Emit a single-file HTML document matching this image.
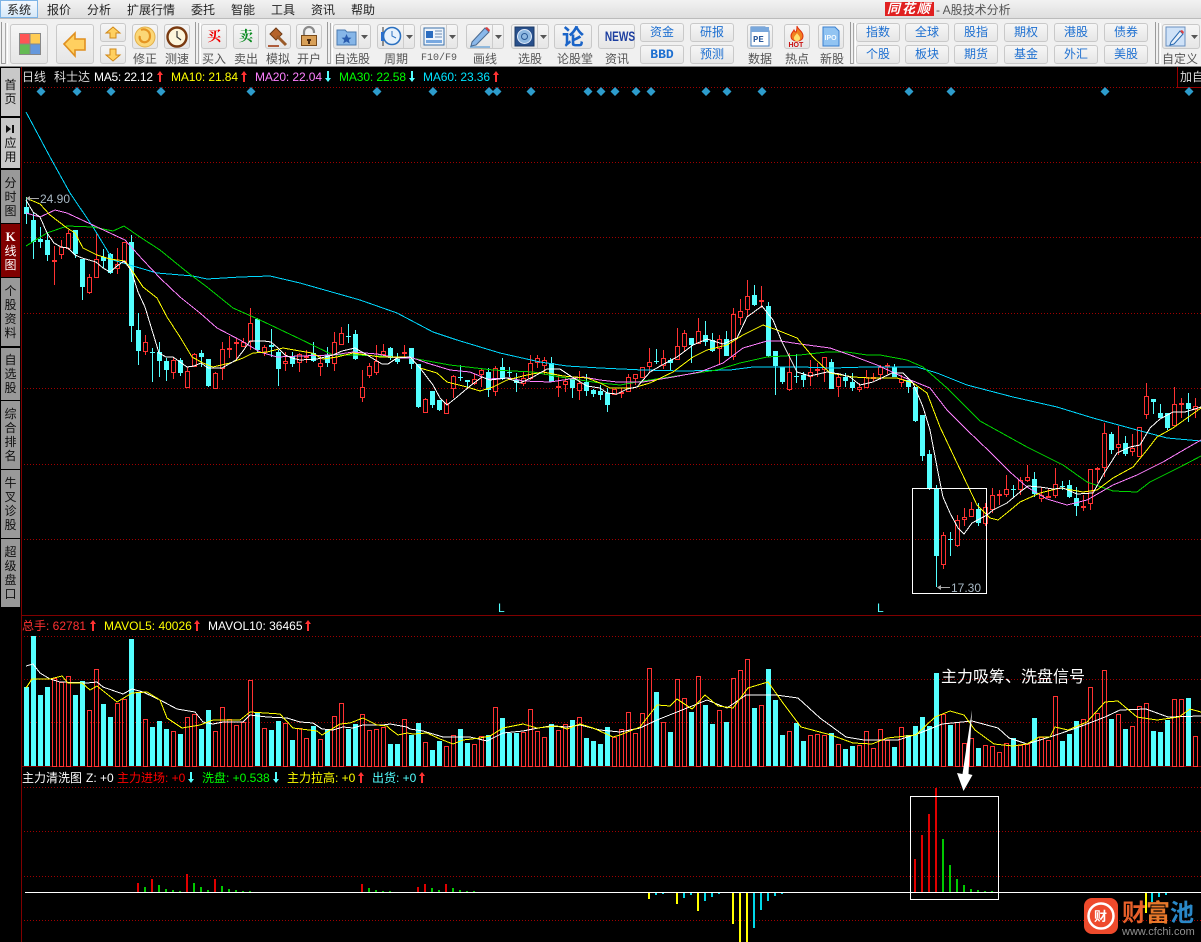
<!DOCTYPE html>
<html><head><meta charset="utf-8"><title>A股技术分析</title>
<style>
html,body{margin:0;padding:0;background:#000;width:1201px;height:942px;overflow:hidden}
body{position:relative;font:12px/14px "Liberation Sans","WenQuanYi Zen Hei","Noto Sans CJK SC",sans-serif}
#menu{position:absolute;left:0;top:0;width:1201px;height:18px;background:linear-gradient(#f2f2f2,#dedede);border-bottom:1px solid #bbb}
#menu span{position:absolute;top:3px;color:#222;white-space:nowrap}
#sel{position:absolute;left:0;top:0;width:36px;height:16px;border:1px solid #7db4e6;background:linear-gradient(#f4f9fe,#d6e8f8)}
#tb{position:absolute;left:0;top:19px;width:1201px;height:47px;background:#f0f0f0;border-bottom:1px solid #888}
.b{position:absolute;box-sizing:border-box;background:linear-gradient(#f6f6f6,#e6e6e6);border:1px solid #c9c9c9;border-radius:3px;text-align:center}
.b svg{position:absolute;left:0;top:0}
.l{position:absolute;top:52px;color:#555;white-space:nowrap}
.t{color:#1d6fd0;line-height:17px}
.s{position:absolute;top:23px;width:1px;height:41px;border-left:1px solid #aaa;border-right:1px solid #fff}
.s2{position:absolute;top:22px;width:4px;height:42px;border-left:1px solid #999;border-bottom:1px solid #999;border-top:0;box-sizing:border-box}
.side{position:absolute;left:1px;width:19px;background:#999;color:#111;text-align:center;line-height:14px;box-sizing:border-box;display:flex;flex-direction:column;justify-content:center;align-items:center}
svg.c{position:absolute;left:0;top:0}
svg text{font-family:"Liberation Sans","WenQuanYi Zen Hei","Noto Sans CJK SC",sans-serif;font-size:12px}
</style></head><body>
<div id="menu"><div id="sel"></div>
<span style="left:7px">系统</span><span style="left:47px">报价</span><span style="left:87px">分析</span><span style="left:127px">扩展行情</span><span style="left:191px">委托</span><span style="left:231px">智能</span><span style="left:271px">工具</span><span style="left:311px">资讯</span><span style="left:351px">帮助</span>
<span style="left:885px;top:2px;width:49px;height:14px;background:#e02020;color:#fff;font-weight:bold;font-style:italic;line-height:14px;font-size:13px;text-align:center;letter-spacing:2px">同花顺</span>
<span style="left:936px;color:#555">- A股技术分析</span></div>
<div id="tb"></div>
<div class="s2" style="left:1px"></div><div class="s" style="left:5px"></div>

<div class="b" style="left:10px;top:24px;width:38px;height:40px"><svg width="36" height="38"><path d="M9 9h10v10H9z" fill="#f55"/><path d="M19 9h10v10H19z" fill="#fc5"/><path d="M9 19h10v10H9z" fill="#6b5"/><path d="M19 19h10v10H19z" fill="#69d"/><path d="M8.5 8.5h21v21h-21zM19 9v20M9 19h20" fill="none" stroke="#888"/></svg></div>
<div class="b" style="left:56px;top:24px;width:38px;height:40px"><svg width="36" height="38"><path d="M7 19 18 8v6h10v11H18v6z" fill="#ffd060" stroke="#e09020" stroke-width="1.6"/></svg></div>
<div class="b" style="left:100px;top:23px;width:26px;height:19px"><svg width="24" height="17"><path d="M12 3l7 6h-4v5H9V9H5z" fill="#ffd060" stroke="#d08818"/></svg></div>
<div class="b" style="left:100px;top:45px;width:26px;height:19px"><svg width="24" height="17"><path d="M12 15l7-6h-4V3H9v6H5z" fill="#ffd060" stroke="#d08818"/></svg></div>
<div class="b" style="left:132px;top:24px;width:26px;height:25px"><svg width="24" height="23"><circle cx="12" cy="12" r="10" fill="#fbd777" stroke="#e2b04a"/><path d="M8 5c4-2 9 1 9 6s-4 7-7 6-4-4-3-6" fill="none" stroke="#e49422" stroke-width="2.2"/></svg></div>
<span class="l" style="left:133px">修正</span>
<div class="b" style="left:164px;top:24px;width:26px;height:25px"><svg width="24" height="23"><circle cx="12" cy="12" r="9.5" fill="#fdf6dc" stroke="#7a3a10" stroke-width="2.4"/><path d="M12 6v6l4 3" fill="none" stroke="#333" stroke-width="1.2"/></svg></div>
<span class="l" style="left:165px">测速</span>

<div class="s2" style="left:195px"></div><div class="s" style="left:198px"></div>
<div class="b" style="left:201px;top:24px;width:26px;height:25px;color:#e00;font:bold 14px/23px 'Noto Serif CJK SC',serif">买</div><span class="l" style="left:202px">买入</span>
<div class="b" style="left:233px;top:24px;width:26px;height:25px;color:#098a20;font:bold 14px/23px 'Noto Serif CJK SC',serif">卖</div><span class="l" style="left:234px">卖出</span>
<div class="b" style="left:265px;top:24px;width:26px;height:25px"><svg width="24" height="23"><path d="M4 9l6-6 6 6-6 6z" fill="#b5632a" stroke="#6e3a14"/><path d="M11 11l9 9" stroke="#9a5a28" stroke-width="3"/><path d="M2 21h11" stroke="#a03a10" stroke-width="1.6"/></svg></div><span class="l" style="left:266px">模拟</span>
<div class="b" style="left:296px;top:24px;width:26px;height:25px"><svg width="24" height="23"><path d="M7 11V7a5 5 0 0 1 10 0v1" fill="none" stroke="#8a8a8a" stroke-width="2.2"/><path d="M4.5 10.5h15v10h-15z" fill="#d8a058" stroke="#7a4a18"/><path d="M10 14h4v2h-1v3h-2v-3h-1z" fill="#4a2a10"/></svg></div><span class="l" style="left:297px">开户</span>

<div class="s2" style="left:327px"></div><div class="s" style="left:330px"></div>
<div class="b" style="left:333px;top:24px;width:38px;height:25px"><svg width="36" height="23"><path d="M3 5h8l2 2h9v13H3z" fill="#86b6e8" stroke="#4a7ab0"/><path d="M12.500 9l1.500 3.500 3.500.3-2.700 2.200 1 3.500-3.300-2-3.300 2 1-3.500-2.700-2.200 3.500-.3z" fill="#2a5cae"/><path d="M24.500 0v23" stroke="#ccc"/><path d="M27 10h7l-3.500 4z" fill="#555"/></svg></div><span class="l" style="left:334px">自选股</span>
<div class="b" style="left:377px;top:24px;width:38px;height:25px"><svg width="36" height="23"><path d="M5 2v19" stroke="#333"/><path d="M3 7h4v9H3z" fill="#2a6fd0"/><circle cx="14" cy="11" r="8.500" fill="#e8f2fc" stroke="#2a70c0" stroke-width="1.600"/><path d="M14 6v5l4 2" fill="none" stroke="#2a70c0"/><path d="M25.500 0v23" stroke="#ccc"/><path d="M28 10h7l-3.500 4z" fill="#555"/></svg></div><span class="l" style="left:384px">周期</span>
<div class="b" style="left:420px;top:24px;width:38px;height:25px"><svg width="36" height="23"><path d="M3 3h20v17H3z" fill="#eef4fb" stroke="#3a70aa"/><path d="M5 6h7v7H5z" fill="#2a6cc0"/><path d="M14 6h7M14 9h7M14 12h7" stroke="#6a8ab0"/><path d="M5 15h16v3H5z" fill="#78a8e0"/><path d="M25.500 0v23" stroke="#ccc"/><path d="M28 10h7l-3.500 4z" fill="#555"/></svg></div><span class="l" style="left:421px;font:10px/14px 'Liberation Mono',monospace;top:52px">F10/F9</span>
<div class="b" style="left:466px;top:24px;width:38px;height:25px"><svg width="36" height="23"><path d="M5 17L18 3l4 4L9 20l-5 1z" fill="#8ab8ea" stroke="#4a6a90"/><path d="M18 3l4 4 1-2-3-3z" fill="#d84040"/><path d="M3 22h20" stroke="#3a8ad0"/><path d="M25.500 0v23" stroke="#ccc"/><path d="M28 10h7l-3.500 4z" fill="#555"/></svg></div><span class="l" style="left:473px">画线</span>
<div class="b" style="left:511px;top:24px;width:38px;height:25px"><svg width="36" height="23"><path d="M3 2h19v19H3z" fill="#28508c" stroke="#1c3a66"/><circle cx="12.500" cy="11.500" r="7" fill="#8fb8e0" stroke="#dfeafa"/><circle cx="12.500" cy="11.500" r="3" fill="none" stroke="#2a5a96"/><path d="M25.500 0v23" stroke="#ccc"/><path d="M28 10h7l-3.500 4z" fill="#555"/></svg></div><span class="l" style="left:518px">选股</span>
<div class="b" style="left:554px;top:24px;width:38px;height:25px;color:#1a64c8;font:bold 22px/23px 'Noto Sans CJK SC',sans-serif">论</div><span class="l" style="left:557px">论股堂</span>
<div class="b" style="left:598px;top:24px;width:37px;height:25px;color:#1c3ea0;font:bold 14px/23px 'Liberation Sans',sans-serif"><span style="display:inline-block;transform:scaleX(.72)">NEWS</span></div><span class="l" style="left:605px">资讯</span>
<div class="b t" style="left:640px;top:23px;width:44px;height:19px">资金</div>
<div class="b t" style="left:640px;top:45px;width:44px;height:19px;font:bold 13px/17px 'Liberation Mono',monospace">BBD</div>
<div class="b t" style="left:690px;top:23px;width:44px;height:19px">研报</div>
<div class="b t" style="left:690px;top:45px;width:44px;height:19px">预测</div>
<div class="b" style="left:747px;top:24px;width:26px;height:25px"><svg width="24" height="23"><path d="M3 2h14l4 4v15H3z" fill="#fff" stroke="#4a80c0"/><path d="M3 2h18v5H3z" fill="#7aa8dc"/><text x="5" y="17" fill="#2a5a9c" style="font:bold 9px 'Liberation Mono',monospace">PE</text></svg></div><span class="l" style="left:748px">数据</span>
<div class="b" style="left:784px;top:24px;width:26px;height:25px"><svg width="24" height="23"><path d="M12 1c1 4 6 5 6 10 0 3-2 5-6 5s-6-2-6-5c0-3 2-4 3-6 1 2 1 2 2 2 1-2 1-4 1-6z" fill="#f08020" stroke="#e03010"/><path d="M12 8c1 2 3 3 3 5s-1 3-3 3-3-1-3-3 2-3 3-5z" fill="#ffe070"/><text x="3.500" y="22" fill="#c81010" style="font:bold 7px 'Liberation Sans',sans-serif">HOT</text></svg></div><span class="l" style="left:785px">热点</span>
<div class="b" style="left:818px;top:24px;width:26px;height:25px"><svg width="24" height="23"><path d="M4 2h12l4 4v15H4z" fill="#92c4f2" stroke="#3a80d0"/><text x="5.500" y="15" fill="#f4faff" style="font:bold 7px 'Liberation Sans',sans-serif">IPO</text></svg></div><span class="l" style="left:820px">新股</span>

<div class="s2" style="left:850px"></div><div class="s" style="left:853px"></div>
<div class="b t" style="left:856px;top:23px;width:44px;height:19px">指数</div><div class="b t" style="left:905px;top:23px;width:44px;height:19px">全球</div><div class="b t" style="left:954px;top:23px;width:44px;height:19px">股指</div><div class="b t" style="left:1004px;top:23px;width:44px;height:19px">期权</div><div class="b t" style="left:1054px;top:23px;width:44px;height:19px">港股</div><div class="b t" style="left:1104px;top:23px;width:44px;height:19px">债券</div>
<div class="b t" style="left:856px;top:45px;width:44px;height:19px">个股</div><div class="b t" style="left:905px;top:45px;width:44px;height:19px">板块</div><div class="b t" style="left:954px;top:45px;width:44px;height:19px">期货</div><div class="b t" style="left:1004px;top:45px;width:44px;height:19px">基金</div><div class="b t" style="left:1054px;top:45px;width:44px;height:19px">外汇</div><div class="b t" style="left:1104px;top:45px;width:44px;height:19px">美股</div>
<div class="s2" style="left:1155px"></div><div class="s" style="left:1158px"></div>
<div class="b" style="left:1162px;top:24px;width:38px;height:25px"><svg width="36" height="23"><path d="M3 2h19v19H3z" fill="#cfe2f8" stroke="#6a90c0"/><path d="M8 17L17 6l3 3-9 10-4 1z" fill="#e8f0fa" stroke="#2a6ab0"/><path d="M17 6l3 3 1-2-2-2z" fill="#e04040"/><path d="M28 10h7l-3.500 4z" fill="#555"/></svg></div><span class="l" style="left:1162px">自定义</span>

<div class="side" style="top:68px;height:48px;background:#c8c8c8">首<br>页</div>
<div class="side" style="top:118px;height:50px;background:#c8c8c8;padding-top:2px"><svg width="10" height="9" style="margin-bottom:2px"><path d="M0 0v8l5-4z M6 0h2v8H6z" fill="#111"/></svg>应<br>用</div>
<div class="side" style="top:170px;height:53px">分<br>时<br>图</div>
<div class="side" style="top:224px;height:53px;background:#800000;color:#fff"><b style="font:bold 13px/14px 'Liberation Serif',serif">K</b>线<br>图</div>
<div class="side" style="top:278px;height:68px">个<br>股<br>资<br>料</div>
<div class="side" style="top:348px;height:52px">自<br>选<br>股</div>
<div class="side" style="top:401px;height:68px">综<br>合<br>排<br>名</div>
<div class="side" style="top:470px;height:68px">牛<br>叉<br>诊<br>股</div>
<div class="side" style="top:539px;height:68px">超<br>级<br>盘<br>口</div>

<svg class="c" width="1201" height="942" viewBox="0 0 1201 942">
<g shape-rendering="crispEdges">
<path d="M21.500 67V942M22 615.500H1201M22 766.500H1201" stroke="#800000" fill="none"/>
<path d="M24 87.500H1177M24 162.500H1201M24 237.500H1201M24 313.500H1201M24 388.500H1201M24 464.500H1201M24 539.500H1201M24 636.500H1201M24 679.500H1201M24 722.500H1201M24 787.500H1201M24 831.500H1201M24 876.500H1201M24 920.500H1201" stroke="#a00000" stroke-dasharray="1 2" fill="none"/>
<path d="M1177.500 67V87.500H1201" stroke="#900" fill="none"/>

<!-- candle wicks -->
<path stroke="#54ffff" fill="none" d="M26.500 197V224M33.500 213V259M40.500 227V248M47.500 232V261M75.500 230V258M82.500 259V300M103.500 249V268M110.500 253V274M131.500 235V342M138.500 313V365M152.500 348V382M159.500 342V377M166.500 358V381M180.500 358V376M201.500 350V367M208.500 359V387M257.500 318V352M271.500 329V357M278.500 350V386M292.500 352V367M313.500 342V362M327.500 347V367M348.500 324V343M355.500 330V360M390.500 347V360M397.500 353V364M411.500 348V369M418.500 364V408M432.500 391V408M439.500 400V411M460.500 365V381M467.500 380V389M488.500 368V397M502.500 358V380M509.500 367V377M516.500 373V392M551.500 357V382M572.500 379V398M586.500 374V396M593.500 389V397M600.500 385V400M607.500 388V412M656.500 349V364M670.500 358V371M691.500 338V363M705.500 321V346M712.500 333V352M726.500 331V356M754.500 285V306M768.500 302V357M775.500 351V395M782.500 367V384M796.500 354V383M803.500 372V387M831.500 359V389M845.500 373V387M852.500 373V391M894.500 364V377M908.500 380V393M915.500 387V422M922.500 415V461M929.500 450V490M936.500 485V587M950.500 532V556M978.500 503V526M1013.500 485V497M1034.500 472V497M1062.500 481V490M1069.500 480V498M1076.500 487V516M1111.500 432V454M1125.500 436V456M1153.500 399V414M1160.500 404V418M1167.500 413V430M1188.500 393V422"/>
<path stroke="#ff3232" fill="none" d="M54.500 246V285M61.500 240V259M68.500 230V250M89.500 274V294M96.500 234V277M117.500 248V274M124.500 242V263M145.500 335V355M173.500 358V379M187.500 367V387M194.500 353V367M215.500 372V388M222.500 342V380M229.500 336V358M236.500 338V359M243.500 338V347M250.500 308V350M264.500 345V356M285.500 352V371M299.500 353V372M306.500 350V363M320.500 355V376M334.500 332V371M341.500 327V345M362.500 370V402M369.500 363V378M376.500 345V375M383.500 344V357M404.500 345V358M425.500 398V413M446.500 399V413M453.500 375V398M474.500 374V385M481.500 369V387M495.500 366V396M523.500 372V386M530.500 355V380M537.500 355V368M544.500 357V375M558.500 375V397M565.500 377V392M579.500 371V400M614.500 389V394M621.500 388V398M628.500 374V392M635.500 374V385M642.500 367V378M649.500 348V373M663.500 350V369M677.500 328V360M684.500 330V352M698.500 318V344M719.500 335V364M733.500 308V360M740.500 299V325M747.500 280V316M761.500 286V308M789.500 353V391M810.500 360V386M817.500 363V377M824.500 357V382M838.500 373V397M859.500 383V392M866.500 370V387M873.500 373V381M880.500 365V380M887.500 363V374M901.500 375V387M943.500 532V569M957.500 515V547M964.500 508V526M971.500 502V516M985.500 503V526M992.500 488V513M999.500 490V505M1006.500 475V497M1020.500 477V495M1027.500 465V482M1041.500 487V502M1048.500 489V498M1055.500 468V498M1083.500 495V511M1090.500 469V510M1097.500 467V483M1104.500 423V477M1118.500 426V455M1132.500 434V456M1139.500 427V456M1146.500 383V419M1174.500 387V425M1181.500 398V418M1195.500 398V418"/>
<!-- candle bodies cyan -->
<path fill="#54ffff" d="M24 207h5v7h-5zM31 220h5v22h-5zM38 239h5v3h-5zM45 240h5v15h-5zM73 230h5v24h-5zM80 259h5v28h-5zM101 257h5v4h-5zM108 254h5v19h-5zM129 242h5v84h-5zM136 330h5v21h-5zM150 352h5v1h-5zM157 352h5v9h-5zM164 361h5v9h-5zM178 360h5v13h-5zM199 353h5v4h-5zM206 359h5v27h-5zM255 319h5v31h-5zM269 345h5v2h-5zM276 352h5v17h-5zM290 356h5v8h-5zM311 353h5v8h-5zM325 355h5v8h-5zM346 336h5v1h-5zM353 334h5v25h-5zM388 348h5v10h-5zM395 359h5v3h-5zM409 348h5v16h-5zM416 364h5v43h-5zM430 391h5v14h-5zM437 400h5v10h-5zM458 377h5v1h-5zM465 380h5v2h-5zM486 372h5v18h-5zM500 367h5v11h-5zM507 372h5v1h-5zM514 380h5v3h-5zM549 363h5v19h-5zM570 379h5v9h-5zM584 382h5v9h-5zM591 390h5v4h-5zM598 391h5v4h-5zM605 393h5v12h-5zM654 361h5v1h-5zM668 360h5v3h-5zM689 338h5v7h-5zM703 335h5v7h-5zM710 340h5v11h-5zM724 339h5v17h-5zM752 295h5v10h-5zM766 306h5v50h-5zM773 351h5v15h-5zM780 367h5v15h-5zM794 376h5v1h-5zM801 375h5v5h-5zM829 362h5v27h-5zM843 377h5v4h-5zM850 382h5v6h-5zM892 367h5v10h-5zM906 380h5v7h-5zM913 387h5v34h-5zM920 415h5v41h-5zM927 454h5v34h-5zM934 488h5v68h-5zM948 539h5v1h-5zM976 509h5v14h-5zM1011 489h5v1h-5zM1032 479h5v15h-5zM1060 486h5v1h-5zM1067 485h5v12h-5zM1074 498h5v8h-5zM1109 434h5v16h-5zM1123 443h5v11h-5zM1151 399h5v3h-5zM1158 413h5v5h-5zM1165 413h5v15h-5zM1186 403h5v6h-5z"/>
<!-- candle bodies red -->
<path fill="#000" stroke="#ff3232" d="M52.500 260.500h4v1h-4zM59.500 247.500h4v7h-4zM66.500 233.500h4v15h-4zM87.500 277.500h4v15h-4zM94.500 259.500h4v18h-4zM115.500 264.500h4v4h-4zM122.500 242.500h4v20h-4zM143.500 342.500h4v9h-4zM171.500 360.500h4v12h-4zM185.500 371.500h4v16h-4zM192.500 354.500h4v12h-4zM213.500 373.500h4v15h-4zM220.500 349.500h4v19h-4zM227.500 348.500h4v1h-4zM234.500 342.500h4v1h-4zM241.500 342.500h4v4h-4zM248.500 323.500h4v18h-4zM262.500 347.500h4v5h-4zM283.500 361.500h4v2h-4zM297.500 354.500h4v8h-4zM304.500 356.500h4v1h-4zM318.500 363.500h4v3h-4zM332.500 342.500h4v21h-4zM339.500 333.500h4v11h-4zM360.500 387.500h4v10h-4zM367.500 366.500h4v9h-4zM374.500 361.500h4v11h-4zM381.500 351.500h4v3h-4zM402.500 352.500h4v1h-4zM423.500 399.500h4v13h-4zM444.500 403.500h4v10h-4zM451.500 376.500h4v12h-4zM472.500 379.500h4v4h-4zM479.500 370.500h4v4h-4zM493.500 368.500h4v23h-4zM521.500 378.500h4v5h-4zM528.500 363.500h4v15h-4zM535.500 358.500h4v4h-4zM542.500 360.500h4v5h-4zM556.500 386.500h4v1h-4zM563.500 381.500h4v3h-4zM577.500 383.500h4v7h-4zM612.500 389.500h4v5h-4zM619.500 392.500h4v1h-4zM626.500 377.500h4v14h-4zM633.500 374.500h4v4h-4zM640.500 367.500h4v10h-4zM647.500 362.500h4v4h-4zM661.500 358.500h4v7h-4zM675.500 346.500h4v13h-4zM682.500 333.500h4v13h-4zM696.500 331.500h4v12h-4zM717.500 339.500h4v9h-4zM731.500 314.500h4v42h-4zM738.500 311.500h4v6h-4zM745.500 296.500h4v13h-4zM759.500 300.500h4v1h-4zM787.500 372.500h4v17h-4zM808.500 372.500h4v4h-4zM815.500 369.500h4v1h-4zM822.500 357.500h4v12h-4zM836.500 377.500h4v9h-4zM857.500 387.500h4v2h-4zM864.500 377.500h4v10h-4zM871.500 377.500h4v1h-4zM878.500 367.500h4v7h-4zM885.500 365.500h4v1h-4zM899.500 379.500h4v3h-4zM941.500 535.500h4v29h-4zM955.500 520.500h4v25h-4zM962.500 517.500h4v2h-4zM969.500 509.500h4v7h-4zM983.500 507.500h4v16h-4zM990.500 495.500h4v14h-4zM997.500 494.500h4v1h-4zM1004.500 489.500h4v5h-4zM1018.500 480.500h4v9h-4zM1025.500 477.500h4v3h-4zM1039.500 495.500h4v3h-4zM1046.500 496.500h4v1h-4zM1053.500 484.500h4v11h-4zM1081.500 506.500h4v1h-4zM1088.500 469.500h4v34h-4zM1095.500 468.500h4v1h-4zM1102.500 433.500h4v34h-4zM1116.500 444.500h4v3h-4zM1130.500 448.500h4v3h-4zM1137.500 427.500h4v29h-4zM1144.500 396.500h4v18h-4zM1172.500 404.500h4v21h-4zM1179.500 403.500h4v1h-4zM1193.500 406.500h4v3h-4z"/>
<!-- MA lines -->
<g fill="none" stroke-linejoin="round">
<polyline stroke="#00d8ff" points="26,112 50,157 70,193 93,227 113,260 133,266 157,273 193,276 207,279 240,277 270,276 300,283 360,300 397,313 433,332 457,340 500,353 540,362 567,366 600,368 643,370 683,371 730,370 753,367 800,367 833,368 867,367 900,367 917,367 937,373 967,385 1013,397 1057,407 1093,418 1137,430 1167,438 1201,441"/>
<polyline stroke="#00d400" points="26,246 47,233 67,226 93,227 113,231 124,226 140,237 160,250 187,272 207,287 233,308 260,320 300,339 333,355 357,355 397,357 417,359 450,365 493,370 533,372 560,377 600,383 620,385 643,381 683,375 717,370 740,363 767,357 800,355 827,352 847,352 867,355 880,355 907,360 923,367 947,388 980,421 1027,447 1063,465 1087,482 1113,491 1137,492 1150,482 1180,467 1201,456"/>
<polyline stroke="#ff80ff" points="26,213 40,217 55,210 67,213 97,227 125,240 143,260 160,278 180,297 200,313 217,328 240,340 260,352 277,357 300,356 333,355 353,352 377,354 397,358 413,358 427,363 450,370 470,372 487,379 510,378 523,381 550,382 583,377 600,380 617,382 643,382 673,377 700,372 723,363 743,348 767,341 780,341 800,344 830,348 853,356 877,365 903,377 930,388 947,410 967,430 990,452 1010,472 1027,487 1047,499 1067,505 1087,500 1113,485 1137,475 1163,462 1187,448 1201,440"/>
<polyline stroke="#ffff00" points="26,198 40,204 50,215 67,228 75,233 83,248 97,255 110,259 125,261 133,272 143,287 157,298 167,317 180,337 192,357 203,363 213,367 230,363 243,358 253,353 267,352 283,348 300,351 312,353 323,359 337,357 353,353 367,355 380,357 410,357 420,368 437,373 447,382 467,387 480,391 493,387 507,380 527,375 543,372 563,376 587,378 600,383 610,388 633,388 650,383 673,372 693,357 707,350 727,345 743,335 763,325 777,330 797,338 813,357 830,373 853,377 870,378 897,378 913,383 927,393 940,427 957,463 977,505 990,518 998,520 1008,512 1020,502 1040,493 1060,488 1083,492 1097,490 1113,478 1133,467 1147,450 1157,437 1173,428 1201,408"/>
<polyline stroke="#ffffff" points="26,200 33,212 40,217 47,233 54,243 61,247 68,248 75,255 82,258 89,260 96,262 103,268 110,272 117,266 124,261 131,270 138,292 145,307 152,330 159,353 166,357 173,357 180,362 187,367 194,366 201,363 208,368 215,368 222,368 229,364 236,360 243,351 250,341 257,341 264,341 271,342 278,348 285,355 292,358 300,360 317,359 333,355 342,351 355,348 367,355 382,364 388,364 397,358 410,357 420,368 433,385 440,398 447,405 457,397 470,386 482,377 490,380 507,378 520,383 533,377 547,369 560,369 572,377 587,386 600,388 607,393 617,394 627,389 637,387 650,372 662,365 677,357 693,345 707,339 723,344 737,338 747,317 762,306 773,320 782,342 797,372 810,376 827,372 840,374 850,377 860,385 873,382 892,373 903,373 913,383 923,407 930,430 937,467 943,497 950,513 958,528 964,534 972,523 987,515 993,510 1007,503 1020,492 1028,486 1040,487 1053,489 1063,488 1077,494 1093,493 1103,475 1117,453 1130,447 1140,445 1150,428 1160,419 1173,412 1185,412 1201,407"/>
</g>
<!-- volume -->
<path fill="#54ffff" d="M24 687h5v79h-5zM31 636h5v130h-5zM38 695h5v71h-5zM45 687h5v79h-5zM73 695h5v71h-5zM80 681h5v85h-5zM101 704h5v62h-5zM108 717h5v49h-5zM129 639h5v127h-5zM136 693h5v73h-5zM150 727h5v39h-5zM157 721h5v45h-5zM164 729h5v37h-5zM178 734h5v32h-5zM199 729h5v37h-5zM206 710h5v56h-5zM255 713h5v53h-5zM269 730h5v36h-5zM276 721h5v45h-5zM290 740h5v26h-5zM311 726h5v40h-5zM325 729h5v37h-5zM346 729h5v37h-5zM353 724h5v42h-5zM388 744h5v22h-5zM395 744h5v22h-5zM409 735h5v31h-5zM416 723h5v43h-5zM430 750h5v16h-5zM437 741h5v25h-5zM458 729h5v37h-5zM465 743h5v23h-5zM486 735h5v31h-5zM500 718h5v48h-5zM507 733h5v33h-5zM514 733h5v33h-5zM549 724h5v42h-5zM570 720h5v46h-5zM584 738h5v28h-5zM591 741h5v25h-5zM598 744h5v22h-5zM605 727h5v39h-5zM654 692h5v74h-5zM668 732h5v34h-5zM689 712h5v54h-5zM703 705h5v61h-5zM710 724h5v42h-5zM724 722h5v44h-5zM752 708h5v58h-5zM766 669h5v97h-5zM773 700h5v66h-5zM780 735h5v31h-5zM794 723h5v43h-5zM801 741h5v25h-5zM829 733h5v33h-5zM843 749h5v17h-5zM850 746h5v20h-5zM892 747h5v19h-5zM906 735h5v31h-5zM913 726h5v40h-5zM920 717h5v49h-5zM927 726h5v40h-5zM934 673h5v93h-5zM948 725h5v41h-5zM976 748h5v18h-5zM1011 738h5v28h-5zM1032 718h5v48h-5zM1060 741h5v25h-5zM1067 734h5v32h-5zM1074 721h5v45h-5zM1109 719h5v47h-5zM1123 729h5v37h-5zM1151 731h5v35h-5zM1158 732h5v34h-5zM1165 720h5v46h-5zM1186 698h5v68h-5z"/>
<path fill="none" stroke="#ff3232" d="M52.500 678.500h4v88h-4zM59.500 682.500h4v84h-4zM66.500 676.500h4v90h-4zM87.500 710.500h4v56h-4zM94.500 669.500h4v97h-4zM115.500 703.500h4v63h-4zM122.500 699.500h4v67h-4zM143.500 719.500h4v47h-4zM171.500 731.500h4v35h-4zM185.500 717.500h4v49h-4zM192.500 714.500h4v52h-4zM213.500 731.500h4v35h-4zM220.500 707.500h4v59h-4zM227.500 719.500h4v47h-4zM234.500 725.500h4v41h-4zM241.500 722.500h4v44h-4zM248.500 680.500h4v86h-4zM262.500 728.500h4v38h-4zM283.500 723.500h4v43h-4zM297.500 728.500h4v38h-4zM304.500 738.500h4v28h-4zM318.500 739.500h4v27h-4zM332.500 716.500h4v50h-4zM339.500 703.500h4v63h-4zM360.500 714.500h4v52h-4zM367.500 730.500h4v36h-4zM374.500 729.500h4v37h-4zM381.500 727.500h4v39h-4zM402.500 719.500h4v47h-4zM423.500 742.500h4v24h-4zM444.500 746.500h4v20h-4zM451.500 735.500h4v31h-4zM472.500 744.500h4v22h-4zM479.500 736.500h4v30h-4zM493.500 707.500h4v59h-4zM521.500 732.500h4v34h-4zM528.500 709.500h4v57h-4zM535.500 731.500h4v35h-4zM542.500 737.500h4v29h-4zM556.500 730.500h4v36h-4zM563.500 724.500h4v42h-4zM577.500 717.500h4v49h-4zM612.500 737.500h4v29h-4zM619.500 729.500h4v37h-4zM626.500 712.500h4v54h-4zM633.500 733.500h4v33h-4zM640.500 713.500h4v53h-4zM647.500 668.500h4v98h-4zM661.500 722.500h4v44h-4zM675.500 679.500h4v87h-4zM682.500 698.500h4v68h-4zM696.500 676.500h4v90h-4zM717.500 710.500h4v56h-4zM731.500 678.500h4v88h-4zM738.500 670.500h4v96h-4zM745.500 659.500h4v107h-4zM759.500 705.500h4v61h-4zM787.500 731.500h4v35h-4zM808.500 735.500h4v31h-4zM815.500 734.500h4v32h-4zM822.500 735.500h4v31h-4zM836.500 744.500h4v22h-4zM857.500 745.500h4v21h-4zM864.500 731.500h4v35h-4zM871.500 748.500h4v18h-4zM878.500 729.500h4v37h-4zM885.500 740.500h4v26h-4zM899.500 727.500h4v39h-4zM941.500 714.500h4v52h-4zM955.500 722.500h4v44h-4zM962.500 743.500h4v23h-4zM969.500 738.500h4v28h-4zM983.500 745.500h4v21h-4zM990.500 746.500h4v20h-4zM997.500 752.500h4v14h-4zM1004.500 743.500h4v23h-4zM1018.500 745.500h4v21h-4zM1025.500 744.500h4v22h-4zM1039.500 737.500h4v29h-4zM1046.500 740.500h4v26h-4zM1053.500 696.500h4v70h-4zM1081.500 719.500h4v47h-4zM1088.500 687.500h4v79h-4zM1095.500 713.500h4v53h-4zM1102.500 670.500h4v96h-4zM1116.500 714.500h4v52h-4zM1130.500 726.500h4v40h-4zM1137.500 706.500h4v60h-4zM1144.500 703.500h4v63h-4zM1172.500 699.500h4v67h-4zM1179.500 699.500h4v67h-4zM1193.500 736.500h4v30h-4z"/>
<g fill="none">
<polyline stroke="#fff" points="26,666 33,664 40,673 50,679 60,682 87,683 97,682 103,687 123,694 132,689 143,692 160,700 177,709 195,712 203,722 213,724 223,722 243,722 250,715 267,717 287,718 300,722 313,723 322,729 333,730 343,727 353,728 363,725 383,725 390,724 407,727 410,729 423,731 443,737 470,737 487,741 503,733 523,731 533,729 550,726 567,727 580,725 600,730 620,732 640,728 657,720 687,708 707,700 727,708 746,695 776,695 798,698 820,718 846,737 864,740 898,740 920,733 942,724 972,721 998,728 1009,738 1027,744 1053,736 1079,727 1105,717 1120,710 1146,709 1168,717 1201,716"/>
<polyline stroke="#ff0" points="26,688 32,679 50,679 62,676 68,683 82,683 90,690 97,686 117,702 132,693 147,692 160,700 167,718 182,728 200,725 213,720 240,720 250,712 280,714 293,728 317,731 322,735 340,724 350,723 363,718 377,725 387,726 390,729 398,735 407,733 413,734 427,733 440,739 453,744 463,740 480,738 490,736 503,728 523,724 537,728 557,726 567,729 580,724 593,728 613,737 620,735 640,727 657,705 670,706 677,699 692,709 705,695 718,706 733,708 748,688 768,682 783,703 801,727 831,735 853,743 872,744 887,738 916,735 935,717 950,711 964,715 975,730 994,744 1013,746 1027,744 1039,737 1050,737 1055,727 1068,730 1087,722 1105,702 1118,701 1137,717 1157,720 1179,717 1190,709 1201,712"/>
</g>
<!-- signal bars -->
<path fill="#e00000" d="M137 883h2v9h-2zM151 879h2v13h-2zM186 874h2v18h-2zM214 879h2v13h-2zM361 884h2v8h-2zM417 887h2v5h-2zM424 884h2v8h-2zM445 884h2v8h-2zM914 859h2v33h-2zM921 835h2v57h-2zM928 814h2v78h-2zM935 788h2v104h-2z"/>
<path fill="#00c800" d="M144 887h2v5h-2zM158 885h2v7h-2zM165 889h2v3h-2zM172 890h2v2h-2zM179 891h2v1h-2zM193 883h2v9h-2zM200 887h2v5h-2zM207 890h2v2h-2zM221 886h2v6h-2zM228 889h2v3h-2zM235 890h2v2h-2zM242 891h2v1h-2zM249 891h2v1h-2zM368 888h2v4h-2zM375 890h2v2h-2zM382 891h2v1h-2zM389 891h2v1h-2zM431 888h2v4h-2zM438 890h2v2h-2zM452 888h2v4h-2zM459 890h2v2h-2zM466 891h2v1h-2zM473 891h2v1h-2zM942 839h2v53h-2zM949 865h2v27h-2zM956 879h2v13h-2zM963 885h2v7h-2zM970 889h2v3h-2zM977 890h2v2h-2zM984 891h2v1h-2zM991 891h2v1h-2z"/>
<path fill="#ff0" d="M648 893h2v6h-2zM676 893h2v11h-2zM697 893h2v18h-2zM732 893h2v31h-2zM739 893h2v49h-2zM746 893h2v49h-2zM1145 893h2v20h-2z"/>
<path fill="#00d8e8" d="M655 893h2v2h-2zM662 893h2v1h-2zM683 893h2v5h-2zM690 893h2v2h-2zM704 893h2v8h-2zM711 893h2v4h-2zM718 893h2v1h-2zM753 893h2v35h-2zM760 893h2v17h-2zM767 893h2v8h-2zM774 893h2v3h-2zM781 893h2v1h-2zM1151 893h2v9h-2zM1158 893h2v4h-2zM1165 893h2v2h-2z"/>
<path d="M25 892.500H1201" stroke="#fff" fill="none"/>
<path d="M912.500 488.500h74v105h-74zM910.500 796.500h88v103h-88z" fill="none" stroke="#fff"/>
</g>
<!-- diamonds -->
<path fill="#2d9ccc" d="M41 87l4.500 4.500-4.500 4.500-4.500-4.500zM77 87l4.500 4.500-4.500 4.500-4.500-4.500zM111 87l4.500 4.500-4.500 4.500-4.500-4.500zM161 87l4.500 4.500-4.500 4.500-4.500-4.500zM251 87l4.500 4.500-4.500 4.500-4.500-4.500zM377 87l4.500 4.500-4.500 4.500-4.500-4.500zM433 87l4.500 4.500-4.500 4.500-4.500-4.500zM489 87l4.500 4.500-4.500 4.500-4.500-4.500zM497 87l4.500 4.500-4.500 4.500-4.500-4.500zM531 87l4.500 4.500-4.500 4.500-4.500-4.500zM588 87l4.500 4.500-4.500 4.500-4.500-4.500zM601 87l4.500 4.500-4.500 4.500-4.500-4.500zM615 87l4.500 4.500-4.500 4.500-4.500-4.500zM636 87l4.500 4.500-4.500 4.500-4.500-4.500zM651 87l4.500 4.500-4.500 4.500-4.500-4.500zM706 87l4.500 4.500-4.500 4.500-4.500-4.500zM727 87l4.500 4.500-4.500 4.500-4.500-4.500zM762 87l4.500 4.500-4.500 4.500-4.500-4.500zM909 87l4.500 4.500-4.500 4.500-4.500-4.500zM951 87l4.500 4.500-4.500 4.500-4.500-4.500zM1105 87l4.500 4.500-4.500 4.500-4.500-4.500zM1189 87l4.500 4.500-4.500 4.500-4.500-4.500z"/>
<!-- arrow overlay -->
<path fill="#fff" d="M972 710 962.500 774 957 773 963.500 791 972.500 775 968.500 774z"/>
<!-- labels -->
<g>
<text x="22" y="81" fill="#ddd">日线</text><text x="54" y="81" fill="#ddd">科士达</text>
<text x="94" y="81" fill="#fff" textLength="59">MA5: 22.12</text><text x="171" y="81" fill="#ff0" textLength="67">MA10: 21.84</text><text x="255" y="81" fill="#ff80ff" textLength="67">MA20: 22.04</text><text x="339" y="81" fill="#0f0" textLength="67">MA30: 22.58</text><text x="423" y="81" fill="#00e4ff" textLength="67">MA60: 23.36</text>
<text x="1180" y="81" fill="#ddd">加自</text>
<text x="40" y="203" fill="#a8b8c4">24.90</text><text x="951" y="592" fill="#a8b8c4">17.30</text>
<path d="M26 198.500l4-2.500v2h9v1h-9v2zM937 587.500l4-2.500v2h9v1h-9v2z" fill="#aaa"/>
<text x="498" y="612" fill="#54ffff">L</text><text x="877" y="612" fill="#54ffff">L</text>
<text x="22" y="630" fill="#ff3232">总手: 62781</text><text x="104" y="630" fill="#ff0">MAVOL5: 40026</text><text x="208" y="630" fill="#fff">MAVOL10: 36465</text>
<text x="22" y="782" fill="#fff">主力清洗图</text><text x="86" y="782" fill="#fff">Z: +0</text><text x="117" y="782" fill="#f00">主力进场: +0</text><text x="202" y="782" fill="#0f0">洗盘: +0.538</text><text x="287" y="782" fill="#ff0">主力拉高: +0</text><text x="372" y="782" fill="#54ffff">出货: +0</text>
<text x="941" y="682" fill="#fff" style="font-size:16px">主力吸筹、洗盘信号</text>
</g>
<!-- up/down indicators -->
<path fill="#ff3232" d="M160 71l3 4h-2v7h-2v-7h-2zM244 71l3 4h-2v7h-2v-7h-2zM496 71l3 4h-2v7h-2v-7h-2zM93 620l3 4h-2v7h-2v-7h-2zM197 620l3 4h-2v7h-2v-7h-2zM308 620l3 4h-2v7h-2v-7h-2zM361 772l3 4h-2v7h-2v-7h-2zM422 772l3 4h-2v7h-2v-7h-2z"/>
<path fill="#54ffff" d="M328 82l3-4h-2v-7h-2v7h-2zM412 82l3-4h-2v-7h-2v7h-2zM191 783l3-4h-2v-7h-2v7h-2zM276 783l3-4h-2v-7h-2v7h-2z"/>
<!-- watermark -->
<rect x="1084" y="898" width="34" height="36" rx="8" fill="#ee4a2c"/>
<circle cx="1101" cy="916" r="12.500" fill="none" stroke="#fff" stroke-width="2.500"/>
<text x="1094" y="921" fill="#fff" style="font-size:13px;font-weight:bold">财</text>
<text x="1122" y="921" style="font-size:24px;font-weight:bold;letter-spacing:0" fill="#e8602a">财<tspan fill="#e8782a">富</tspan><tspan fill="#2a88c8">池</tspan></text>
<text x="1122" y="935" fill="#909090" style="font-size:11px">www.cfchi.com</text>
</svg>
</body></html>
